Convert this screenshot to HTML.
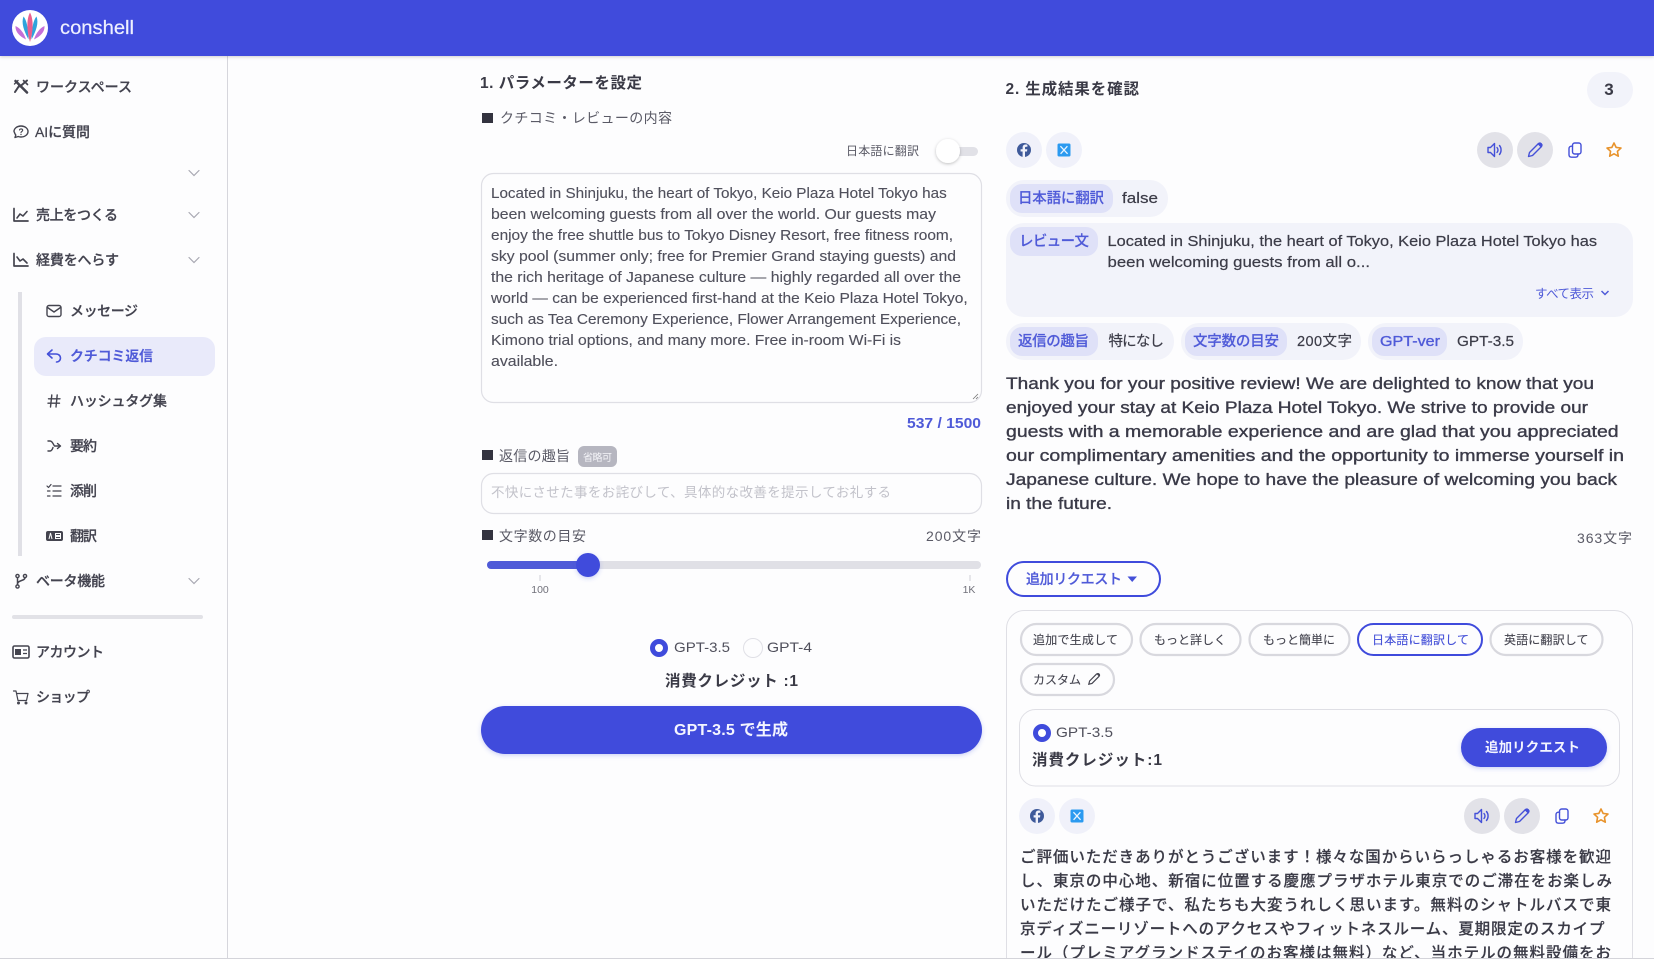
<!DOCTYPE html>
<html lang="ja">
<head>
<meta charset="utf-8">
<title>conshell</title>
<style>
html,body{margin:0;padding:0;width:1654px;height:959px;overflow:hidden;background:#fdfdfe}
svg{display:block}
text{font-family:"Liberation Sans","Noto Sans CJK JP",sans-serif;fill:#3c3c48}
.s{font-size:14px;font-weight:500;fill:#43434f;stroke:#43434f;stroke-width:.25}
.l{font-size:14px;fill:#5a5a66}
.h{font-size:15.5px;font-weight:700;fill:#3a3a46}
.p{font-size:14.5px;fill:#50505c;stroke:#50505c;stroke-width:.12}
.r{font-size:16.5px;fill:#3a3a48;stroke:#3a3a48;stroke-width:.35}
.t{font-size:14.5px;font-weight:500;fill:#4f5ad8;stroke:#4f5ad8;stroke-width:.15}
.v{font-size:14.5px;fill:#3c3c48;stroke:#3c3c48;stroke-width:.2}
.c{font-size:12px;fill:#44444f;stroke:#44444f;stroke-width:.12}
.j{font-size:15.5px;font-weight:500;fill:#3a3a46;stroke:#3a3a46;stroke-width:.15}
.ic{fill:none;stroke:#44444f;stroke-width:1.4;stroke-linecap:round;stroke-linejoin:round}
.bl{fill:none;stroke:#4450d8;stroke-width:1.4;stroke-linecap:round;stroke-linejoin:round}
</style>
</head>
<body>
<svg xmlns="http://www.w3.org/2000/svg" width="1654" height="959" viewBox="0 0 1654 959">
<defs>
<filter id="sh" x="-20%" y="-30%" width="140%" height="170%"><feDropShadow dx="0" dy="1.5" stdDeviation="2" flood-color="#3f4bdc" flood-opacity=".25"/></filter>
<filter id="ks" x="-50%" y="-50%" width="200%" height="200%"><feDropShadow dx="0" dy="1" stdDeviation="1.5" flood-color="#000" flood-opacity=".25"/></filter>
<filter id="hs" x="-5%" y="-20%" width="110%" height="150%"><feDropShadow dx="0" dy="1" stdDeviation="1.5" flood-color="#000" flood-opacity=".18"/></filter>
<g id="chev"><path d="M-5-2.5 0 2.5 5-2.5" fill="none" stroke="#a8a8b2" stroke-width="1.2" stroke-linecap="round"/></g>
<g id="fb"><circle r="7" fill="#3f5a9a"/><path d="M1 7V1.5H3L3.3-.8H1V-2.2C1-2.9 1.3-3.3 2.2-3.3H3.4V-5.3C3-5.4 2.3-5.5 1.6-5.5-.3-5.5-1.4-4.3-1.4-2.4V-.8H-3.4V1.5H-1.4V7Z" fill="#f0f1fa"/></g>
<g id="xx"><rect x="-6.5" y="-6.5" width="13" height="13" rx="1.5" fill="#2b9af0"/><path d="M-3.6-3.8 3.6 3.8M3.4-3.8-3.4 3.8" stroke="#e8f4ff" stroke-width="1.3"/></g>
<g id="spk" class="bl"><path d="M-7-2.5H-4.5L-.5-6.5V6.5L-4.5 2.5H-7Z"/><path d="M2-2.5C3.2-1 3.2 1 2 2.5M4.5-4.5C6.6-2 6.6 2 4.5 4.5"/></g>
<g id="pen" class="bl"><path d="M-6.5 6.5-5.5 2.5 3 -6C4-7 5.5-7 6.3-6.2 7-5.4 7-4 6-3L-2.5 5.5Z"/><path d="M3.2-6.2 6.2-3.2 7-5 5-7Z" fill="#4450d8"/></g>
<g id="cp" class="bl"><rect x="-2.5" y="-7" width="8.5" height="11" rx="2.2"/><path d="M-2.5-3.8H-3.5C-5-3.8-6-2.8-6-1.3V4.8C-6 6.3-5 7.2-3.5 7.2H.5C2 7.2 3 6.3 3 4.8V4"/></g>
<g id="st"><path d="M0-7 2.1-2.6 7-2 3.4 1.3 4.3 6.2 0 3.8-4.3 6.2-3.4 1.3-7-2-2.1-2.6Z" fill="none" stroke="#e8932c" stroke-width="1.6" stroke-linejoin="round"/></g>
<g id="side"><path d="M28.5 39.5C24 31 21 23 23.5 16.500C26.8 20 28.500 30 28.500 39.500Z" fill="#2fa3dc"/><path d="M26 39.500C20 36.500 15 32 15.500 26C20 28 24 33 26 39.500Z" fill="#c46fd8"/></g>
</defs>

<rect width="1654" height="959" fill="#fdfdfe"/>

<!-- sidebar -->
<rect x="227" y="56" width="1" height="903" fill="#d6d6dc"/>
<rect x="18" y="292" width="4" height="264" fill="#e0e0e6"/>
<rect x="34" y="337" width="181" height="39" rx="12" fill="#e9eafa"/>
<rect x="12" y="615" width="191" height="4" rx="2" fill="#e2e2e7"/>

<text class="s" x="36" y="92" textLength="96">ワークスペース</text>
<text class="s" x="35" y="137" textLength="55">AIに質問</text>
<text class="s" x="36" y="220" textLength="82">売上をつくる</text>
<text class="s" x="36" y="265" textLength="83">経費をへらす</text>
<text class="s" x="70" y="316" textLength="68">メッセージ</text>
<text class="s" x="70" y="361" textLength="83" style="fill:#4f5ad8;stroke:#4f5ad8;font-weight:700;stroke-width:0">クチコミ返信</text>
<text class="s" x="70" y="406" textLength="97">ハッシュタグ集</text>
<text class="s" x="70" y="451" textLength="27">要約</text>
<text class="s" x="70" y="496" textLength="27">添削</text>
<text class="s" x="70" y="541" textLength="27">翻訳</text>
<text class="s" x="36" y="586" textLength="69">ベータ機能</text>
<text class="s" x="36" y="657" textLength="68">アカウント</text>
<text class="s" x="36" y="702" textLength="54">ショップ</text>

<use href="#chev" x="194" y="173"/><use href="#chev" x="194" y="215"/><use href="#chev" x="194" y="260"/><use href="#chev" x="194" y="581"/>

<!-- sidebar icons -->
<g class="ic" transform="translate(21 87)"><path d="M-5.5-6 6 5.5" stroke-width="2.6"/><path d="M6-6.5-1-.5M-2-1-6 5" stroke-width="2"/><path d="M2.5-6.5 6.5-2.5" stroke-width="1.6"/><path d="M-6.5-3-3-6.5"/></g>
<g class="ic" transform="translate(21 132)"><path d="M0-6C4-6 7-3.5 7-.5S4 5 0 5C-1 5-2 4.8-2.8 4.5L-6 5.5-5.2 3C-6.3 2-7-.9-7-.5-7-3.5-4-6 0-6Z"/><path d="M-1.5-2C-1.2-3.5 1.6-3.500 1.7-1.8 1.7-.6 0-.6 0 .6" stroke-width="1.1"/><path d="M0 2.4V2.5" stroke-width="1.3"/></g>
<g class="ic" transform="translate(21 215)"><path d="M-7-6.5V6H7" stroke-width="1.7"/><path d="M-4 3-1-1 2 1 6-3.5" stroke-width="1.6"/></g>
<g class="ic" transform="translate(21 260)"><path d="M-7-6.5V6H7" stroke-width="1.7"/><path d="M-4-3-1 1 2-1 6 3" stroke-width="1.6"/></g>
<g class="ic" transform="translate(54 311)"><rect x="-7" y="-5.5" width="14" height="11" rx="2"/><path d="M-6.5-3.5 0 1 6.5-3.5"/></g>
<g class="bl" transform="translate(54 356)" style="stroke-width:1.6"><path d="M-2-6-6.5-2-2 2"/><path d="M-6-2H2C5-2 6.5 0 6.5 2S5 6 2.5 6"/></g>
<g transform="translate(54 401)" class="ic"><path d="M-2.2-6-3.5 6M3.2-6 2 6M-5.5-2.2H6M-6 2.2H5.5"/></g>
<g class="ic" transform="translate(54 446)"><path d="M-6-5H-4C-1.500-5-1-2 .5 0H6M-6 5H-4C-2.500 5-1.500 3-1 1.500"/><path d="M3.500-2.500 6.500 0 3.500 2.500"/></g>
<g class="ic" transform="translate(54 491)"><path d="M-1-5H7M-1 0H7M-1 5H7" stroke-width="1.2"/><path d="M-7-5-5.500-3.500-3-6.500M-6.500 0H-4M-6.500 5H-4" stroke-width="1.2"/></g>
<rect x="46" y="531" width="17" height="10" rx="2" fill="#44444f"/>
<rect x="55" y="533" width="6" height="6" fill="#fdfdfe"/>
<path d="M49 539 50.500 533 52 539" stroke="#fdfdfe" fill="none" stroke-width="1"/>
<path d="M56 534.500H60M56 537.500H60" stroke="#44444f" fill="none" stroke-width="1"/>
<g class="ic" transform="translate(21 581)"><circle cx="-3.500" cy="-5" r="1.6"/><circle cx="-3.500" cy="5.500" r="1.6"/><circle cx="4" cy="-5" r="1.6"/><path d="M-3.500-3.200V3.800M4-3.200C4 0-3.500-1-3.500 3" stroke-width="1.500"/></g>
<rect x="13" y="646" width="16" height="12" rx="1.500" fill="#fdfdfe" stroke="#44444f" stroke-width="1.6"/>
<rect x="15" y="649" width="6" height="6" fill="#44444f"/><path d="M23 650H27M23 653.500H27" stroke="#44444f" stroke-width="1.200"/>
<g class="ic" transform="translate(21 697)"><path d="M-7.500-6H-5L-3 3.500H5.500L7-3.500H-4.400" stroke-width="1.200"/><circle cx="-2.500" cy="6" r=".8"/><circle cx="5" cy="6" r=".8"/></g>

<!-- header -->
<rect width="1654" height="56" fill="#3f4bdc" filter="url(#hs)"/>
<circle cx="30" cy="28" r="18" fill="#fff"/>
<use href="#side"/>
<use href="#side" transform="translate(60 0) scale(-1 1)"/>
<path d="M30 42C27 32 26 20 30 12.500C34 20 33 32 30 42Z" fill="#ea5f8e"/>
<text x="60" y="34" font-size="19.500" textLength="74" lengthAdjust="spacingAndGlyphs" style="fill:#eef0ff;stroke:#eef0ff;stroke-width:.2">conshell</text>

<!-- left column -->
<text class="h" x="480" y="88" textLength="162">1. パラメーターを設定</text>
<rect x="482" y="113" width="11" height="10" fill="#33333f"/>
<text class="l" x="500" y="123" textLength="172">クチコミ・レビューの内容</text>
<text x="846" y="155" font-size="12" textLength="73" style="fill:#5a5a66">日本語に翻訳</text>
<rect x="940" y="147" width="38" height="9" rx="4.500" fill="#e1e1e7"/>
<circle cx="948" cy="151" r="12" fill="#fff" filter="url(#ks)"/>

<rect x="481.500" y="173.500" width="500" height="229" rx="12" fill="#fdfdfe" stroke="#dfdfe5" stroke-width="1.200"/>
<path d="M973 399 978 394M976 399 978 397" stroke="#777" stroke-width=".8"/>
<text class="p" x="491" y="198" textLength="455.700" lengthAdjust="spacingAndGlyphs">Located in Shinjuku, the heart of Tokyo, Keio Plaza Hotel Tokyo has</text>
<text class="p" x="491" y="219" textLength="445" lengthAdjust="spacingAndGlyphs">been welcoming guests from all over the world. Our guests may</text>
<text class="p" x="491" y="240" textLength="462" lengthAdjust="spacingAndGlyphs">enjoy the free shuttle bus to Tokyo Disney Resort, free fitness room,</text>
<text class="p" x="491" y="261" textLength="465" lengthAdjust="spacingAndGlyphs">sky pool (summer only; free for Premier Grand staying guests) and</text>
<text class="p" x="491" y="282" textLength="470" lengthAdjust="spacingAndGlyphs">the rich heritage of Japanese culture — highly regarded all over the</text>
<text class="p" x="491" y="303" textLength="476.700" lengthAdjust="spacingAndGlyphs">world — can be experienced first-hand at the Keio Plaza Hotel Tokyo,</text>
<text class="p" x="491" y="324" textLength="470" lengthAdjust="spacingAndGlyphs">such as Tea Ceremony Experience, Flower Arrangement Experience,</text>
<text class="p" x="491" y="345" textLength="410" lengthAdjust="spacingAndGlyphs">Kimono trial options, and many more. Free in-room Wi-Fi is</text>
<text class="p" x="491" y="366" textLength="67" lengthAdjust="spacingAndGlyphs">available.</text>
<text x="907" y="428" font-size="14.500" font-weight="700" textLength="74" lengthAdjust="spacingAndGlyphs" style="fill:#4f5ad8">537 / 1500</text>

<rect x="482" y="450" width="11" height="10" fill="#33333f"/>
<text class="l" x="499" y="461" textLength="71">返信の趣旨</text>
<rect x="578" y="446" width="39" height="21" rx="6" fill="#b6b6c0"/>
<text x="583" y="461" font-size="10" textLength="29" style="fill:#f4f4f8">省略可</text>
<rect x="481.500" y="473.500" width="500" height="40" rx="12" fill="#fdfdfe" stroke="#dfdfe5" stroke-width="1.200"/>
<text x="491" y="497" font-size="13.500" textLength="400" style="fill:#c2c2ca">不快にさせた事をお詫びして、具体的な改善を提示してお礼する</text>

<rect x="482" y="530" width="11" height="10" fill="#33333f"/>
<text class="l" x="499" y="541" textLength="87">文字数の目安</text>
<text class="l" x="926" y="541" textLength="55">200文字</text>

<rect x="487" y="561" width="494" height="8" rx="4" fill="#e0e0e6"/>
<rect x="487" y="561" width="101" height="8" rx="4" fill="#4f5ad8"/>
<circle cx="588" cy="565" r="12" fill="#3f4bdc" filter="url(#sh)"/>
<rect x="539.500" y="575" width="1" height="6" fill="#d0d0d6"/><rect x="969.500" y="575" width="1" height="6" fill="#d0d0d6"/>
<text x="540" y="593" font-size="10.500" text-anchor="middle" style="fill:#70707a">100</text>
<text x="969" y="593" font-size="10.500" text-anchor="middle" style="fill:#70707a">1K</text>

<circle cx="659" cy="648" r="6.500" fill="#fff" stroke="#3f4bdc" stroke-width="5"/>
<text x="674" y="652" font-size="14" textLength="56" lengthAdjust="spacingAndGlyphs" style="fill:#50505c">GPT-3.5</text>
<circle cx="753" cy="648" r="9.500" fill="#fdfdfe" stroke="#e0e0e6" stroke-width="1"/>
<text x="767" y="652" font-size="14" textLength="45" lengthAdjust="spacingAndGlyphs" style="fill:#50505c">GPT-4</text>
<text class="h" x="665" y="686" textLength="133">消費クレジット :1</text>

<rect x="481" y="706" width="501" height="48" rx="24" fill="#3f4bdc" filter="url(#sh)"/>
<text x="674" y="735" font-size="16" font-weight="700" textLength="114" style="fill:#f4f5ff">GPT-3.5 で生成</text>

<!-- right column -->
<text class="h" x="1005.500" y="94" textLength="133.500">2. 生成結果を確認</text>
<rect x="1587" y="72" width="46" height="36" rx="18" fill="#f2f3fa"/>
<text x="1609" y="95" font-size="17" font-weight="700" text-anchor="middle" style="fill:#3a3a46">3</text>

<circle cx="1024" cy="150" r="18" fill="#f0f1fa"/><circle cx="1064" cy="150" r="18" fill="#f0f1fa"/>
<circle cx="1495" cy="150" r="18" fill="#e2e2e8"/><circle cx="1535" cy="150" r="18" fill="#e2e2e8"/>
<use href="#fb" x="1024" y="150"/><use href="#xx" x="1064" y="150"/>
<use href="#spk" x="1495" y="150"/><use href="#pen" x="1535" y="150"/><use href="#cp" x="1575" y="150"/><use href="#st" x="1614" y="150"/>

<rect x="1006" y="180" width="162" height="37" rx="18" fill="#f2f3fa"/>
<rect x="1010" y="184" width="103" height="29" rx="12" fill="#dfe1f8"/>
<text class="t" x="1018" y="203" textLength="86">日本語に翻訳</text>
<text class="v" x="1122" y="203" textLength="36" lengthAdjust="spacingAndGlyphs">false</text>

<rect x="1006" y="223" width="627" height="94" rx="18" fill="#f2f3fa"/>
<rect x="1010" y="227" width="88" height="29" rx="12" fill="#dfe1f8"/>
<text class="t" x="1019" y="246" textLength="70">レビュー文</text>
<text class="v" x="1107.500" y="246" textLength="489.500" lengthAdjust="spacingAndGlyphs">Located in Shinjuku, the heart of Tokyo, Keio Plaza Hotel Tokyo has</text>
<text class="v" x="1107.500" y="267" textLength="262.500" lengthAdjust="spacingAndGlyphs">been welcoming guests from all o...</text>
<text x="1535" y="298" font-size="12.500" textLength="59" style="fill:#4f5ad8">すべて表示</text>
<path d="M1601.500 291 1605 294.500 1608.500 291" fill="none" stroke="#4f5ad8" stroke-width="1.500"/>

<rect x="1006" y="323" width="168" height="37" rx="18" fill="#f2f3fa"/>
<rect x="1010" y="327" width="88" height="29" rx="12" fill="#dfe1f8"/>
<text class="t" x="1018" y="346" textLength="71">返信の趣旨</text>
<text class="v" x="1108.500" y="346" textLength="55.500">特になし</text>
<rect x="1181" y="323" width="180" height="37" rx="18" fill="#f2f3fa"/>
<rect x="1185" y="327" width="102" height="29" rx="12" fill="#dfe1f8"/>
<text class="t" x="1193" y="346" textLength="86">文字数の目安</text>
<text class="v" x="1297" y="346" textLength="55">200文字</text>
<rect x="1368" y="323" width="155" height="37" rx="18" fill="#f2f3fa"/>
<rect x="1372" y="327" width="75" height="29" rx="12" fill="#dfe1f8"/>
<text class="t" x="1380" y="346" textLength="60" lengthAdjust="spacingAndGlyphs" style="font-weight:400;stroke-width:.35">GPT-ver</text>
<text class="v" x="1457" y="346" textLength="57" lengthAdjust="spacingAndGlyphs">GPT-3.5</text>

<text class="r" x="1006" y="389" textLength="588" lengthAdjust="spacingAndGlyphs">Thank you for your positive review! We are delighted to know that you</text>
<text class="r" x="1006" y="413" textLength="582" lengthAdjust="spacingAndGlyphs">enjoyed your stay at Keio Plaza Hotel Tokyo. We strive to provide our</text>
<text class="r" x="1006" y="437" textLength="612.600" lengthAdjust="spacingAndGlyphs">guests with a memorable experience and are glad that you appreciated</text>
<text class="r" x="1006" y="461" textLength="618" lengthAdjust="spacingAndGlyphs">our complimentary amenities and the opportunity to immerse yourself in</text>
<text class="r" x="1006" y="485" textLength="611" lengthAdjust="spacingAndGlyphs">Japanese culture. We hope to have the pleasure of welcoming you back</text>
<text class="r" x="1006" y="509" textLength="106" lengthAdjust="spacingAndGlyphs">in the future.</text>

<text class="l" x="1577" y="543" textLength="55">363文字</text>

<rect x="1007" y="562" width="153" height="34" rx="17" fill="#fdfdfe" stroke="#3f4bdc" stroke-width="2"/>
<text x="1026" y="584" font-size="14" font-weight="500" textLength="96" style="fill:#4f5ad8;stroke:#4f5ad8;stroke-width:.2">追加リクエスト</text>
<path d="M1127.500 576.500H1137L1132.200 582Z" fill="#4450d8"/>

<rect x="1006.500" y="610.500" width="626" height="370" rx="18" fill="#fdfdfe" stroke="#dfdfe5" stroke-width="1"/>

<g fill="#fdfdfe" stroke="#d8d8de" stroke-width="2.200">
<rect x="1021" y="624" width="111" height="31" rx="15.500"/>
<rect x="1140.500" y="624" width="100" height="31" rx="15.500"/>
<rect x="1249.500" y="624" width="100" height="31" rx="15.500"/>
<rect x="1490.500" y="624" width="112" height="31" rx="15.500"/>
<rect x="1021" y="664" width="93" height="31" rx="15.500"/>
</g>
<rect x="1358" y="624" width="124" height="31" rx="15.500" fill="#fdfdfe" stroke="#3f4bdc" stroke-width="2"/>
<text class="c" x="1033" y="644" textLength="85">追加で生成して</text>
<text class="c" x="1154" y="644" textLength="72">もっと詳しく</text>
<text class="c" x="1263" y="644" textLength="72">もっと簡単に</text>
<text class="c" x="1372" y="644" textLength="97" style="fill:#4450d8;stroke:#4450d8">日本語に翻訳して</text>
<text class="c" x="1504" y="644" textLength="84.500">英語に翻訳して</text>
<text class="c" x="1033" y="684" textLength="48">カスタム</text>
<g transform="translate(1094 679) scale(.8)"><path d="M-6.500 6.500-5.500 2.500 3-6C4-7 5.500-7 6.300-6.200 7-5.400 7-4 6-3L-2.500 5.500Z" fill="none" stroke="#44444f" stroke-width="1.500"/><path d="M3.200-6.200 6.200-3.200 7-5 5-7Z" fill="#44444f"/></g>

<rect x="1019.500" y="709.500" width="600" height="76.500" rx="16" fill="#fdfdfe" stroke="#dfdfe5" stroke-width="1"/>
<circle cx="1042" cy="733" r="6.500" fill="#fff" stroke="#3f4bdc" stroke-width="5"/>
<text x="1056" y="737" font-size="14" textLength="57" lengthAdjust="spacingAndGlyphs" style="fill:#50505c">GPT-3.5</text>
<text class="h" x="1032" y="765" textLength="130">消費クレジット:1</text>
<rect x="1461" y="728" width="146" height="39" rx="19.500" fill="#3f4bdc" filter="url(#sh)"/>
<text x="1485" y="752" font-size="13.500" font-weight="700" textLength="95" style="fill:#f4f5ff">追加リクエスト</text>

<circle cx="1037" cy="816" r="18" fill="#f0f1fa"/><circle cx="1077" cy="816" r="18" fill="#f0f1fa"/>
<circle cx="1482" cy="816" r="18" fill="#e2e2e8"/><circle cx="1522" cy="816" r="18" fill="#e2e2e8"/>
<use href="#fb" x="1037" y="816"/><use href="#xx" x="1077" y="816"/>
<use href="#spk" x="1482" y="816"/><use href="#pen" x="1522" y="816"/><use href="#cp" x="1562" y="816"/><use href="#st" x="1601" y="816"/>

<text class="j" x="1020" y="862" textLength="591">ご評価いただきありがとうございます！様々な国からいらっしゃるお客様を歓迎</text>
<text class="j" x="1020" y="886" textLength="592">し、東京の中心地、新宿に位置する慶應プラザホテル東京でのご滞在をお楽しみ</text>
<text class="j" x="1020" y="910" textLength="591">いただけたご様子で、私たちも大変うれしく思います。無料のシャトルバスで東</text>
<text class="j" x="1020" y="934" textLength="584.500">京ディズニーリゾートへのアクセスやフィットネスルーム、夏期限定のスカイプ</text>
<text class="j" x="1020" y="958" textLength="591">ール（プレミアグランドステイのお客様は無料）など、当ホテルの無料設備をお</text>

<rect x="0" y="958" width="1654" height="1" fill="#d4d4da"/>
</svg>
</body>
</html>
